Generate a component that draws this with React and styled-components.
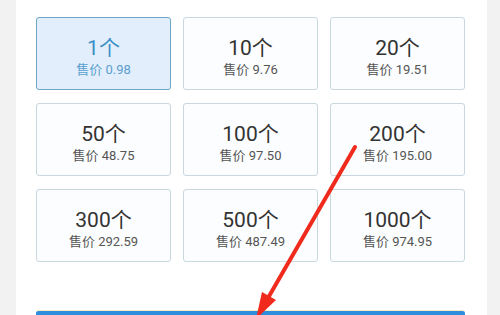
import React from "react";
import styled, { createGlobalStyle } from "styled-components";

const Global = createGlobalStyle`
  html, body { margin: 0; padding: 0; background: #f2f2f2; }
  body { width: 500px; height: 315px; overflow: hidden; }
`;

const Page = styled.div`
  position: relative;
  width: 500px;
  height: 315px;
  display: flex;
  background: #f2f2f2;
  overflow: hidden;
`;

const Panel = styled.main`
  margin-left: 16px;
  width: 471px;
  height: 315px;
  background: #ffffff;
  padding: 17px 22px 0 20px;
  box-sizing: border-box;
  display: flex;
  flex-direction: column;
`;

const Grid = styled.div`
  display: grid;
  grid-template-columns: repeat(3, 135px);
  grid-auto-rows: 73px;
  column-gap: 12px;
  row-gap: 13px;
`;

const Card = styled.div`
  box-sizing: border-box;
  border: 1px solid ${(p) => (p.$active ? "#6fa8c2" : "#c9d7df")};
  border-radius: 3px;
  background: ${(p) => (p.$active ? "#e2eefb" : "#fcfdfe")};
  display: flex;
  flex-direction: column;
  align-items: center;
  justify-content: center;
  padding-top: 6px;
  font-family: Roboto, "Noto Sans CJK SC", sans-serif;
`;

const Qty = styled.div`
  font-size: 21px;
  line-height: 24px;
  color: ${(p) => (p.$active ? "#3a8fc7" : "#333333")};
`;

const Price = styled.div`
  margin-top: 2px;
  font-size: 13px;
  line-height: 16px;
  color: ${(p) => (p.$active ? "#5a9fcf" : "#555555")};
`;

const Button = styled.div`
  margin-top: 48px;
  width: 429px;
  height: 20px;
  background: #2e8ede;
  border-top: 1px solid #f4e9c8;
  border-radius: 3px 3px 0 0;
`;

const Arrow = styled.svg`
  position: absolute;
  left: 0;
  top: 0;
  pointer-events: none;
`;

const items = [
  ["1个", "0.98"],
  ["10个", "9.76"],
  ["20个", "19.51"],
  ["50个", "48.75"],
  ["100个", "97.50"],
  ["200个", "195.00"],
  ["300个", "292.59"],
  ["500个", "487.49"],
  ["1000个", "974.95"],
];

export default function App() {
  return (
    <Page>
      <Global />
      <Panel>
        <Grid>
          {items.map(([q, p], i) => (
            <Card key={q} $active={i === 0}>
              <Qty $active={i === 0}>{q}</Qty>
              <Price $active={i === 0}>售价 {p}</Price>
            </Card>
          ))}
        </Grid>
        <Button />
      </Panel>
      <Arrow width="500" height="315" viewBox="0 0 500 315">
        <line x1="355" y1="147" x2="268" y2="298" stroke="#f02a1c" strokeWidth="4" strokeLinecap="round" />
        <polygon points="256,319 262,292 276,300" fill="#f02a1c" />
      </Arrow>
    </Page>
  );
}
